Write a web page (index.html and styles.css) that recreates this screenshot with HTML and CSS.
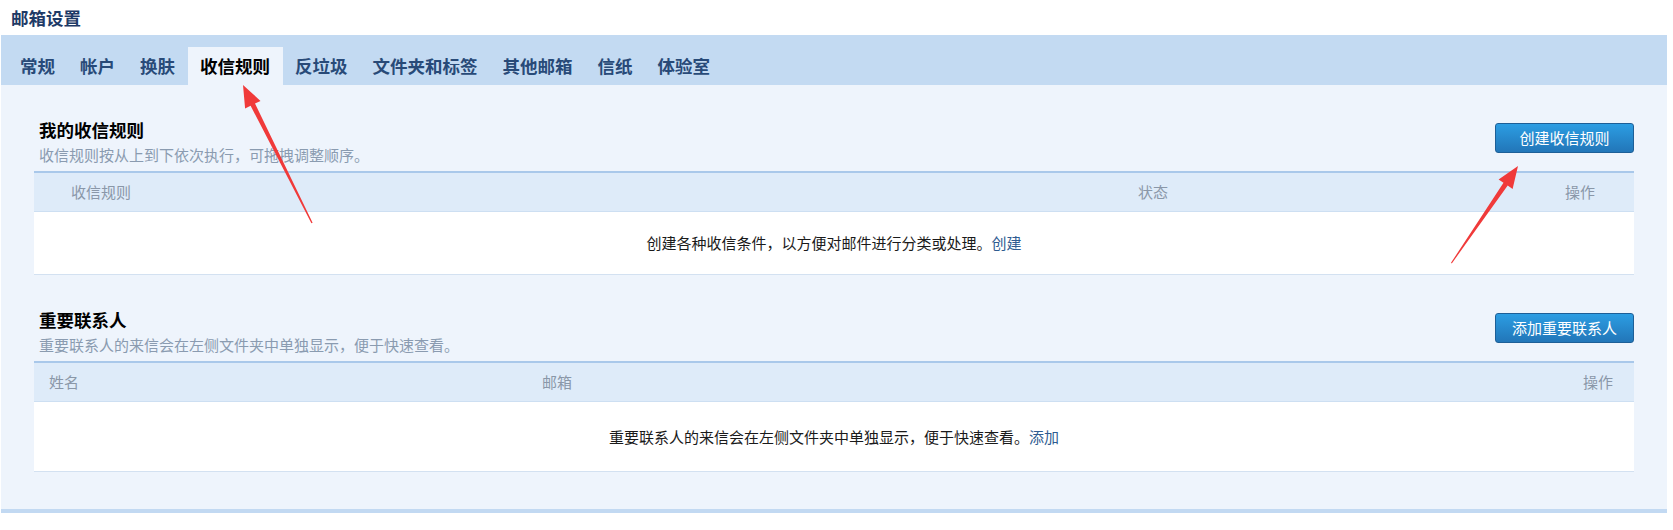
FILE: index.html
```html
<!DOCTYPE html>
<html lang="zh-CN">
<head>
<meta charset="utf-8">
<title>邮箱设置</title>
<link rel="stylesheet" href="styles.css">
</head>
<body>
<div class="page">
  <h1 class="page-title">邮箱设置</h1>
  <div class="panel">
    <nav class="tabs">
      <a class="tab">常规</a>
      <a class="tab">帐户</a>
      <a class="tab">换肤</a>
      <a class="tab active">收信规则</a>
      <a class="tab">反垃圾</a>
      <a class="tab">文件夹和标签</a>
      <a class="tab">其他邮箱</a>
      <a class="tab">信纸</a>
      <a class="tab">体验室</a>
    </nav>
    <div class="content">
      <section class="block">
        <div class="block-head">
          <div class="block-text">
            <h2 class="block-title">我的收信规则</h2>
            <p class="block-desc">收信规则按从上到下依次执行，可拖拽调整顺序。</p>
          </div>
          <button class="btn">创建收信规则</button>
        </div>
        <div class="table">
          <div class="thead thead-rules">
            <span class="col-first">收信规则</span>
            <span>状态</span>
            <span class="col-last">操作</span>
          </div>
          <div class="tbody tbody-rules">创建各种收信条件，以方便对邮件进行分类或处理。<a class="link">创建</a></div>
        </div>
      </section>
      <section class="block">
        <div class="block-head">
          <div class="block-text">
            <h2 class="block-title">重要联系人</h2>
            <p class="block-desc">重要联系人的来信会在左侧文件夹中单独显示，便于快速查看。</p>
          </div>
          <button class="btn">添加重要联系人</button>
        </div>
        <div class="table">
          <div class="thead thead-contacts">
            <span class="col-first">姓名</span>
            <span>邮箱</span>
            <span class="col-last">操作</span>
          </div>
          <div class="tbody tbody-contacts">重要联系人的来信会在左侧文件夹中单独显示，便于快速查看。<a class="link">添加</a></div>
        </div>
      </section>
    </div>
  </div>
  <svg class="annot" width="1673" height="530" viewBox="0 0 1673 530">
    <polygon class="arrow" points="312.6,222.7 255.0,103.6 260.5,100.9 243,85 245.1,108.5 250.6,105.8 311.4,223.3"/>
    <polygon class="arrow" points="1451.8,263.4 1507.7,185.6 1512.6,189.0 1518,166 1498.6,179.4 1503.5,182.8 1451.0,262.8"/>
  </svg>
</div>
</body>
</html>
```
FILE: styles.css
```css
* { box-sizing: border-box; }

html, body {
  margin: 0;
  padding: 0;
  background: #ffffff;
}

body {
  font-family: "Noto Sans CJK SC", "Microsoft YaHei", "Noto Sans", sans-serif;
  color: #222;
}

.page {
  position: relative;
  width: 1673px;
  height: 530px;
  overflow: hidden;
}

.page-title {
  margin: 0;
  height: 35px;
  line-height: 35px;
  padding-left: 11px;
  font-size: 17.5px;
  font-weight: bold;
  color: #1e3a66;
}

.panel {
  margin-left: 1px;
  width: 1666px;
}

.tabs {
  display: flex;
  align-items: flex-end;
  height: 50px;
  padding-left: 6.5px;
  background: #c3daf2;
}

.tab {
  display: block;
  height: 38px;
  line-height: 38px;
  padding: 0 12.5px;
  font-size: 17.5px;
  font-weight: bold;
  color: #284a78;
  cursor: pointer;
}

.tab.active {
  background: #eef4fc;
  color: #000;
}

.content {
  background: #eef4fc;
  padding: 0 33px 37px;
  border-bottom: 4px solid #c2d9f2;
}

.block {
  padding-top: 34px;
}

.block-head {
  display: flex;
  justify-content: space-between;
  align-items: flex-start;
  margin-bottom: 5px;
}

.block-text {
  padding-left: 5px;
}

.block-title {
  margin: 0;
  font-size: 17.5px;
  line-height: 22px;
  font-weight: bold;
  color: #000;
}

.block-desc {
  margin: 3px 0 0;
  font-size: 15px;
  line-height: 22px;
  color: #8a9bb0;
}

.btn {
  margin-top: 4px;
  width: 139px;
  height: 30px;
  padding: 0;
  border: 1px solid #1d5f97;
  border-radius: 3px;
  background: linear-gradient(#2c9de2, #2276b8);
  color: #fff;
  font-family: inherit;
  font-size: 15px;
  line-height: 28px;
  cursor: pointer;
}

.table {
  border-top: 2px solid #a9c8ea;
  background: #fff;
}

.thead {
  display: grid;
  height: 39px;
  line-height: 38px;
  background: #deebf9;
  border-bottom: 1px solid #cddff2;
  font-size: 15px;
  color: #8a97a8;
}

.thead-rules {
  grid-template-columns: 1104px 1fr auto;
}

.thead-rules .col-first { padding-left: 37px; }
.thead-rules .col-last { padding-right: 39px; }

.thead-contacts {
  grid-template-columns: 508px 1fr auto;
}

.thead-contacts .col-first { padding-left: 15px; }
.thead-contacts .col-last { padding-right: 21px; }

.tbody {
  text-align: center;
  font-size: 15px;
  color: #1a1a1a;
  border-bottom: 1px solid #d3e1f1;
}

.tbody-rules {
  height: 63px;
  line-height: 62px;
}

.tbody-contacts {
  height: 70px;
  line-height: 69px;
}

.link {
  color: #2f5c91;
  cursor: pointer;
}

.annot {
  position: absolute;
  left: 0;
  top: 0;
  pointer-events: none;
}

.arrow {
  fill: #f03a3a;
}
```
